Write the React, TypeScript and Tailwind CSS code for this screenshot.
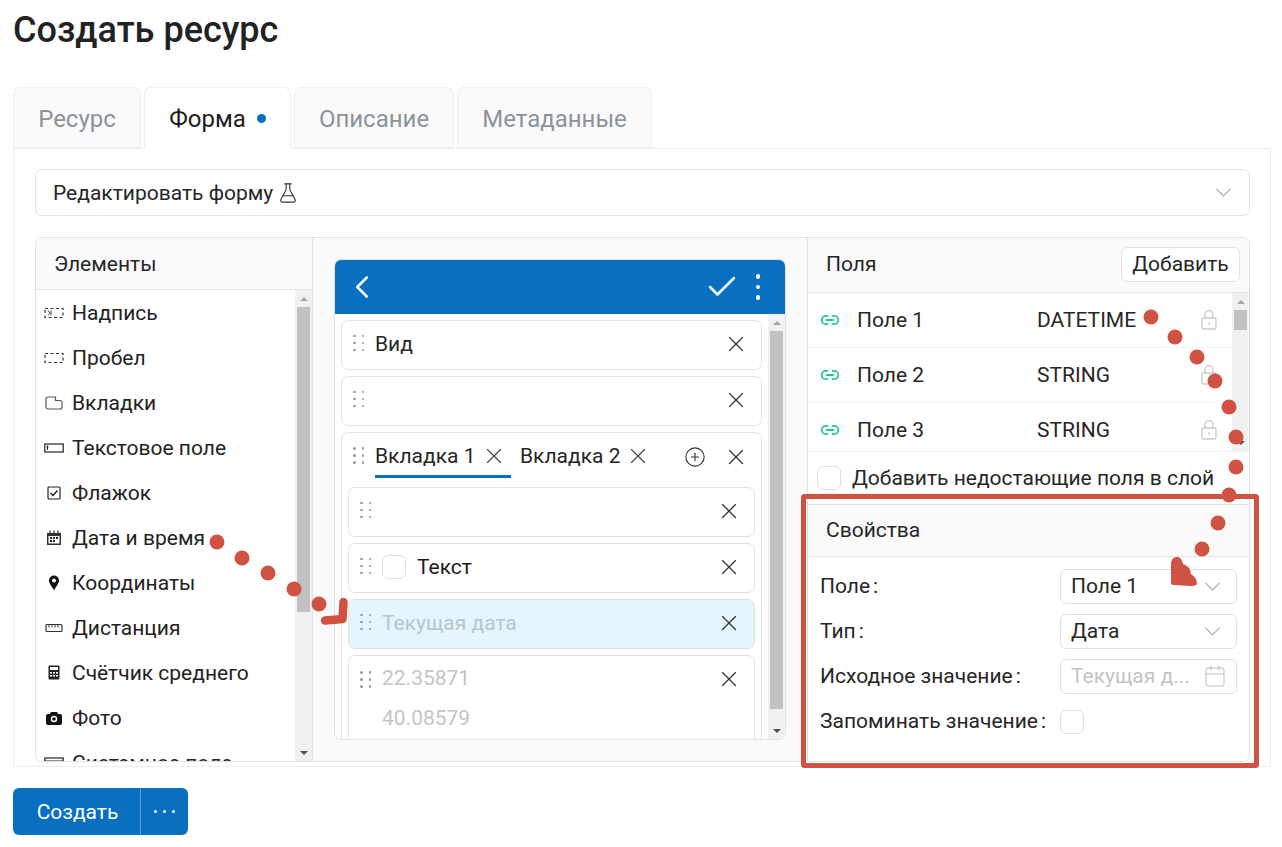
import { ChevronDown, ChevronLeft, Check, X, CirclePlus, FlaskConical, Link2, Calendar } from "lucide-react"

const LabelIcon = () => (
    <svg width="20" height="12" viewBox="0 0 20 12" fill="none" stroke="#333" strokeWidth="1.2">
        <rect x="1" y="1.500" width="18" height="9" strokeDasharray="3 2.500" />
        <path d="M4 3.500l2 2.500-2 2.500M7 3.500v5" strokeWidth="0.9" />
    </svg>
)
const SpaceIcon = () => (
    <svg width="20" height="12" viewBox="0 0 20 12" fill="none" stroke="#333" strokeWidth="1.2">
        <rect x="1" y="1.500" width="18" height="9" strokeDasharray="3 2.500" />
    </svg>
)
const TabsIcon = () => (
    <svg width="18" height="14" viewBox="0 0 18 14" fill="none" stroke="#555" strokeWidth="1.200">
        <path d="M3 1h7.500v3.500H15a2 2 0 0 1 2 2V11a2 2 0 0 1-2 2H3a2 2 0 0 1-2-2V3a2 2 0 0 1 2-2z" />
    </svg>
)
const InputIcon = () => (
    <svg width="20" height="12" viewBox="0 0 20 12" fill="none" stroke="#222" strokeWidth="1.2">
        <rect x="0.800" y="2" width="18.400" height="8" />
        <path d="M3.500 3.500v4.500M2.500 5h2" strokeWidth="1" />
    </svg>
)
const CheckIcon = () => (
    <svg width="14" height="14" viewBox="0 0 14 14" fill="none" stroke="#222" strokeWidth="1.200">
        <rect x="1" y="1" width="12" height="12" rx="1" />
        <path d="M3.500 7l2.500 2.500L10.500 4.500" strokeWidth="1.500" />
    </svg>
)
const DateIcon = () => (
    <svg width="16" height="16" viewBox="0 0 16 16">
        <path d="M1 3h14v12H1z" fill="#333" />
        <path d="M4 0.500v3M8 0.500v3M12 0.500v3" stroke="#222" strokeWidth="1.200" />
        <path d="M2.500 6h11v7.500h-11z" fill="#fff" />
        <path d="M4 7h2v2H4zM7 7h2v2H7zM10 7h2v2h-2zM4 10h2v2H4zM7 10h2v2H7z" fill="#222" />
    </svg>
)
const PinIcon = () => (
    <svg width="12" height="16" viewBox="0 0 12 16">
        <path d="M6 0.500a5 5 0 0 1 5 5c0 3-3 6-5 10-2-4-5-7-5-10a5 5 0 0 1 5-5z" fill="#111" />
        <circle cx="6" cy="5.500" r="2" fill="#fff" />
    </svg>
)
const RulerIcon = () => (
    <svg width="18" height="10" viewBox="0 0 18 10" fill="none" stroke="#333" strokeWidth="1.200">
        <rect x="1" y="1.500" width="16" height="7" rx="1" />
        <path d="M4 2v2.500M7 2v2.500M10 2v2.500M13 2v2.500" strokeWidth="1" />
    </svg>
)
const CalcIcon = () => (
    <svg width="12" height="15" viewBox="0 0 12 15">
        <rect x="0.500" y="0.500" width="11" height="14" rx="1" fill="#222" />
        <rect x="2" y="2" width="8" height="3" fill="#fff" />
        <path d="M2 7h2v1.500H2zM5 7h2v1.500H5zM8 7h2v1.500H8zM2 10h2v1.500H2zM5 10h2v1.500H5zM8 10h2v1.500H8z" fill="#fff" />
    </svg>
)
const PhotoIcon = () => (
    <svg width="16" height="14" viewBox="0 0 16 14">
        <path d="M5 1h6l1.200 2H14a2 2 0 0 1 2 2v7a2 2 0 0 1-2 2H2a2 2 0 0 1-2-2V5a2 2 0 0 1 2-2h1.800z" fill="#111" />
        <circle cx="8" cy="8" r="3.200" fill="#fff" />
        <circle cx="8" cy="8" r="1.800" fill="#111" />
    </svg>
)
const SystemIcon = () => (
    <svg width="20" height="12" viewBox="0 0 20 12" fill="none" stroke="#222" strokeWidth="1.200">
        <rect x="0.800" y="1" width="18.400" height="10" />
        <path d="M0.800 4h18.400" />
    </svg>
)
const LockIcon = () => (
    <svg width="16" height="20" viewBox="0 0 16 20" fill="none" stroke="#c9c9c9" strokeWidth="1.300" className="shrink-0">
        <rect x="1" y="8" width="14" height="11" rx="1.500" />
        <path d="M4 8V4.500a4 4 0 0 1 8 0V8" />
        <circle cx="8" cy="13.500" r="1" fill="#c9c9c9" stroke="none" />
    </svg>
)

const elements = [
    { name: "Надпись", icon: <LabelIcon /> },
    { name: "Пробел", icon: <SpaceIcon /> },
    { name: "Вкладки", icon: <TabsIcon /> },
    { name: "Текстовое поле", icon: <InputIcon /> },
    { name: "Флажок", icon: <CheckIcon /> },
    { name: "Дата и время", icon: <DateIcon /> },
    { name: "Координаты", icon: <PinIcon /> },
    { name: "Дистанция", icon: <RulerIcon /> },
    { name: "Счётчик среднего", icon: <CalcIcon /> },
    { name: "Фото", icon: <PhotoIcon /> },
    { name: "Системное поле", icon: <SystemIcon /> },
]

const fields = [
    { name: "Поле 1", type: "DATETIME" },
    { name: "Поле 2", type: "STRING" },
    { name: "Поле 3", type: "STRING" },
]

const Scrollbar = ({ thumb }: { thumb: string }) => (
    <div className="flex flex-col w-[17px] shrink-0 bg-[#f1f1f1] items-center">
        <div className="h-[17px] shrink-0 flex items-center justify-center">
            <div className="w-0 h-0 border-x-[4px] border-x-transparent border-b-[4px] border-b-[#a3a3a3]" />
        </div>
        <div className={`w-[13px] bg-[#c1c1c1] ${thumb}`} />
        <div className="flex-1" />
        <div className="h-[17px] shrink-0 flex items-center justify-center">
            <div className="w-0 h-0 border-x-[4px] border-x-transparent border-t-[4px] border-t-[#505050]" />
        </div>
    </div>
)

const Grip = () => (
    <div className="grid grid-cols-2 gap-x-[7.500px] gap-y-[4.500px] w-[10px] shrink-0 -mt-[2px]">
        {[0, 1, 2, 3, 4, 5].map((i) => (
            <div key={i} className="w-[2.500px] h-[2.500px] rounded-full bg-[#9a9a9a]" />
        ))}
    </div>
)

const Close = () => <X size={26} strokeWidth={1.200} className="text-[#333] shrink-0" />

const Row = ({ children, className = "" }: { children?: React.ReactNode; className?: string }) => (
    <div className={`h-[50px] shrink-0 flex items-center pl-[11px] pr-[12px] pb-[2px] border border-[#e2e2e2] rounded-[7px] bg-white ${className}`}>
        <Grip />
        <div className="flex-1 min-w-0 pl-[12px] flex items-center">{children}</div>
        <Close />
    </div>
)

const Box = () => <div className="w-[24px] h-[24px] rounded-[6px] border border-[#e0e0e0] bg-white shrink-0" />

const Control = ({ children, muted = false }: { children: React.ReactNode; muted?: boolean }) => (
    <div className={`w-[177px] h-[35px] flex items-center justify-between pl-[10px] pr-[10px] pb-[1px] border border-[#e0e0e0] rounded-[6px] ${muted ? "text-[#c4c4c4]" : ""}`}>
        {children}
    </div>
)

const FormRow = ({ label, children }: { label: string; children: React.ReactNode }) => (
    <div className="h-[35px] flex items-center">
        <div className="w-[252px] pl-[12px] pb-[1px] flex items-center">
            {label}
            <span className="ml-[3px]">:</span>
        </div>
        {children}
    </div>
)

const PaneHeader = ({ children, className = "pb-[1px]" }: { children: React.ReactNode; className?: string }) => (
    <div className={`flex items-center justify-between bg-[#fafafa] border-b border-[#e2e2e2] pl-[18px] pr-[9px] h-full ${className}`}>{children}</div>
)

const Annotations = () => (
    <svg className="absolute left-0 top-0 pointer-events-none" width="1282" height="847" fill="#d05243">
        {[[217, 542], [242, 558], [268, 573], [294, 589], [319, 604]].map(([x, y]) => (
            <circle key={x} cx={x} cy={y} r="7.500" />
        ))}
        <path d="M343.500 602L342.500 619L325 620.500" fill="none" stroke="#d05243" strokeWidth="8.500" strokeLinecap="round" strokeLinejoin="round" />
        {[[1151, 317], [1175, 337], [1197, 357], [1215, 381], [1229, 407], [1236, 437], [1236, 467], [1229, 495], [1218, 523], [1202, 549]].map(([x, y]) => (
            <circle key={y} cx={x} cy={y} r="7.500" />
        ))}
        <path d="M1171 583V563Q1172 556 1178 557Q1182 558 1183 564Q1190 566 1191 574Q1197 578 1197 584Q1196 586 1190 586L1175 585Q1171 585 1171 583z" />
        <rect x="803.500" y="496.500" width="453" height="269" rx="1" fill="none" stroke="#d05243" strokeWidth="5" />
    </svg>
)

export default function App() {
    return (
        <div className="relative w-[1282px] h-[847px] overflow-hidden bg-white pl-[13px] pr-[11px] text-[21px] leading-[24px] text-[#262626] font-['Roboto',sans-serif]">
            <h1 className="pt-[10px] h-[87px] text-[36px] leading-[40px] font-medium text-[#222]">Создать ресурс</h1>

            <div className="flex h-[61px] text-[24px] text-[#8a939b]">
                <div className="w-[128px] pt-[2px] flex items-center justify-center bg-[#fafafa] border border-[#eeeeee] rounded-t-[7px]">Ресурс</div>
                <div className="relative z-10 ml-[3px] w-[147px] h-[62px] flex items-center justify-center gap-[11px] bg-white text-[#1c1c1c] border border-b-0 border-[#eeeeee] rounded-t-[7px]">
                    Форма
                    <div className="w-[9px] h-[9px] rounded-full bg-[#086fc1]" />
                </div>
                <div className="ml-[3px] w-[160px] pt-[2px] flex items-center justify-center bg-[#fafafa] border border-[#eeeeee] rounded-t-[7px]">Описание</div>
                <div className="ml-[3px] w-[195px] pt-[2px] flex items-center justify-center bg-[#fafafa] border border-[#eeeeee] rounded-t-[7px]">Метаданные</div>
            </div>

            <div className="h-[619px] border border-[#eeeeee] pl-[21px] pr-[20px] pt-[20px]">
                <div className="h-[47px] flex items-center justify-between pl-[17px] pr-[12px] border border-[#e2e2e2] rounded-[7px]">
                    <div className="flex items-center gap-[4px]">
                        Редактировать форму
                        <FlaskConical size={22} strokeWidth={1.200} className="text-[#333]" />
                    </div>
                    <ChevronDown size={27} strokeWidth={1} className="text-[#a8a8a8]" />
                </div>

                <div className="mt-[21px] h-[525px] flex border border-[#e2e2e2] rounded-[7px] overflow-hidden">
                    <div className="w-[277px] shrink-0 flex flex-col border-r border-[#e2e2e2]">
                        <div className="h-[52px] shrink-0"><PaneHeader className="pt-[1px]">Элементы</PaneHeader></div>
                        <div className="flex-1 min-h-0 flex">
                            <div className="flex-1 overflow-hidden">
                                {elements.map((el) => (
                                    <div key={el.name} className="h-[45px] flex items-center text-[#222]">
                                        <div className="w-[36px] pl-[7px] pr-[7px] flex items-center justify-center shrink-0">{el.icon}</div>
                                        {el.name}
                                    </div>
                                ))}
                            </div>
                            <Scrollbar thumb="h-[305px]" />
                        </div>
                    </div>

                    <div className="w-[495px] shrink-0 bg-[#fafafa] border-r border-[#e2e2e2] pl-[21px] pr-[21px] pt-[21px] pb-[21px]">
                        <div className="h-full flex flex-col border border-[#e2e2e2] rounded-[7px] overflow-hidden bg-white">
                            <div className="h-[54px] shrink-0 bg-[#086fc1] flex items-center justify-between text-white pl-[8px] pr-[25px]">
                                <ChevronLeft size={38} strokeWidth={1.600} />
                                <div className="flex items-center gap-[16px]">
                                    <Check size={36} strokeWidth={1.700} />
                                    <div className="flex flex-col gap-[6px]">
                                        <div className="w-[4.500px] h-[4.500px] rounded-full bg-white" />
                                        <div className="w-[4.500px] h-[4.500px] rounded-full bg-white" />
                                        <div className="w-[4.500px] h-[4.500px] rounded-full bg-white" />
                                    </div>
                                </div>
                            </div>
                            <div className="flex-1 min-h-0 flex">
                                <div className="flex-1 overflow-hidden pl-[6px] pr-[6px] pt-[6px] flex flex-col gap-[6px]">
                                    <Row>Вид</Row>
                                    <Row />
                                    <div className="shrink-0 border border-[#e2e2e2] rounded-[7px] px-[6px]">
                                        <div className="h-[54px] flex items-start -mx-[6px] pl-[11px] pr-[12px]">
                                            <div className="h-[47px] flex items-center"><Grip /></div>
                                            <div className="flex-1 pl-[12px] flex">
                                                <div className="h-[45px] w-[136px] pt-[3px] border-b-[3px] border-[#086fc1] flex items-center gap-[6px]">
                                                    Вкладка 1 <X size={26} strokeWidth={1} className="text-[#444]" />
                                                </div>
                                                <div className="h-[46px] ml-[9px] flex items-center gap-[5px]">
                                                    Вкладка 2 <X size={26} strokeWidth={1} className="text-[#444]" />
                                                </div>
                                                <div className="h-[47px] ml-auto mr-[17px] flex items-center">
                                                    <CirclePlus size={22} strokeWidth={1.200} className="text-[#333]" />
                                                </div>
                                            </div>
                                            <div className="h-[47px] flex items-center"><Close /></div>
                                        </div>
                                        <div className="flex flex-col gap-[6px] pb-[6px]">
                                            <Row />
                                            <Row>
                                                <div className="flex items-center gap-[11px] text-[#1c1c1c]"><Box />Текст</div>
                                            </Row>
                                            <Row className="!bg-[#e3f6fd]"><span className="text-[#b9c4c9]">Текущая дата</span></Row>
                                            <div className="h-[95px] shrink-0 border border-[#e2e2e2] rounded-[7px] pl-[11px] pr-[12px] pt-[10px] flex items-start">
                                                <div className="pt-[7px]"><Grip /></div>
                                                <div className="flex-1 pl-[12px] text-[#c4c4c4] flex flex-col gap-[15.500px]">
                                                    <div>22.35871</div>
                                                    <div>40.08579</div>
                                                </div>
                                                <Close />
                                            </div>
                                        </div>
                                    </div>
                                </div>
                                <Scrollbar thumb="h-[378px]" />
                            </div>
                        </div>
                    </div>

                    <div className="flex-1 min-w-0 flex flex-col">
                        <div className="h-[55px] shrink-0">
                            <PaneHeader className="pb-[2px]">
                                Поля
                                <div className="h-[35px] w-[119px] flex items-center justify-center bg-white border border-[#e2e2e2] rounded-[6px]">Добавить</div>
                            </PaneHeader>
                        </div>
                        <div className="h-[159px] shrink-0 flex border-b border-[#f0f0f0]">
                            <div className="flex-1 overflow-hidden">
                                {fields.map((f) => (
                                    <div key={f.name} className="h-[55px] flex items-center border-b border-[#f2f2f2]">
                                        <Link2 size={20} strokeWidth={2.200} className="ml-[12px] text-[#22c98f] shrink-0" />
                                        <div className="ml-[17px] w-[180px] shrink-0">{f.name}</div>
                                        <div className="w-[164px] shrink-0">{f.type}</div>
                                        <LockIcon />
                                    </div>
                                ))}
                            </div>
                            <Scrollbar thumb="h-[20px]" />
                        </div>
                        <div className="h-[52px] shrink-0 flex items-center gap-[11px] pl-[9px]"><Box />Добавить недостающие поля в слой</div>
                        <div className="h-[53px] shrink-0 border-t border-[#e2e2e2]"><PaneHeader>Свойства</PaneHeader></div>
                        <div className="flex flex-col gap-[10px] pt-[12px]">
                            <FormRow label="Поле"><Control>Поле 1<ChevronDown size={27} strokeWidth={1} className="text-[#a8a8a8]" /></Control></FormRow>
                            <FormRow label="Тип"><Control>Дата<ChevronDown size={27} strokeWidth={1} className="text-[#a8a8a8]" /></Control></FormRow>
                            <FormRow label="Исходное значение"><Control muted>Текущая д...<Calendar size={24} strokeWidth={1} className="text-[#bdbdbd] -mr-[1px]" /></Control></FormRow>
                            <FormRow label="Запоминать значение"><Box /></FormRow>
                        </div>
                    </div>
                </div>
            </div>

            <div className="mt-[21px] w-[175px] h-[47px] flex items-center bg-[#086fc1] text-white rounded-[6px]">
                <div className="w-[128px] h-full pl-[2px] flex items-center justify-center border-r border-[#5a9fd6]">Создать</div>
                <div className="flex-1 flex items-center justify-center gap-[6px]">
                    <div className="w-[3px] h-[3px] rounded-full bg-white" />
                    <div className="w-[3px] h-[3px] rounded-full bg-white" />
                    <div className="w-[3px] h-[3px] rounded-full bg-white" />
                </div>
            </div>

            <Annotations />
        </div>
    )
}
